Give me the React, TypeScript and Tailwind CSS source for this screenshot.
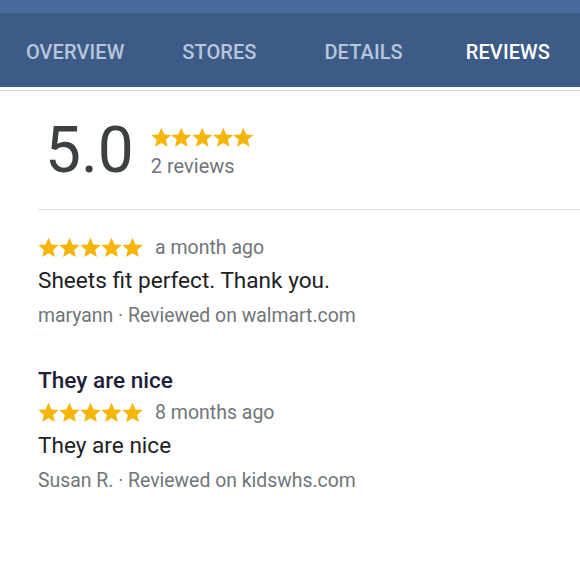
import React from 'react'

const tabs = ['Overview', 'Stores', 'Details', 'Reviews']

const reviews = [
  {
    title: '',
    when: 'a month ago',
    text: 'Sheets fit perfect. Thank you.',
    author: 'maryann',
    site: 'walmart.com',
  },
  {
    title: 'They are nice',
    when: '8 months ago',
    text: 'They are nice',
    author: 'Susan R.',
    site: 'kidswhs.com',
  },
]

function Stars({ size }: { size: number }) {
  return (
    <div className="flex">
      {[0, 1, 2, 3, 4].map((i) => (
        <svg key={i} width={size} height={size} viewBox="1 1.2 22 21.6" className="fill-[#f5b50a]">
          <path d="M12 1.8l3.1 7.1 7.6.6-5.8 5 1.8 7.5L12 18 5.3 22l1.8-7.5-5.8-5 7.6-.6z" />
        </svg>
      ))}
    </div>
  )
}

export default function App() {
  return (
    <main className="w-[580px] h-[578px] bg-white overflow-hidden font-['Roboto','Liberation_Sans',sans-serif]">
      <div className="h-[13px] bg-[#486a9c]" />
      <nav className="flex h-[74px] pt-[3px] pl-[3px] bg-[#3c5b86]">
        {tabs.map((t) => (
          <div
            key={t}
            className={
              'flex-1 flex items-center justify-center uppercase text-[20px] font-medium tracking-[0.1px] ' +
              (t === 'Reviews' ? 'text-white' : 'text-[#b8c6dc]')
            }
          >
            {t}
          </div>
        ))}
      </nav>
      <div className="flex h-[3px] border-b border-[#d6d6d6] box-content">
        <div className="flex-[3]" />
        <div className="flex-1 bg-white" />
      </div>

      <section className="pl-[38px]">
        <div className="flex items-start pt-[28px] pl-[7px]">
          <div className="text-[64px] leading-none text-[#3c4043]">5.0</div>
          <div className="ml-[17px] pt-[8px]">
            <Stars size={20.6} />
            <div className="mt-[3px] text-[20px] text-[#70757a]">2 reviews</div>
          </div>
        </div>
        <div className="mt-[26px] h-px bg-[#dadce0]" />

        {reviews.map((r, i) => (
          <div key={i} className={i === 0 ? 'pt-[21px]' : 'pt-[31px]'}>
            {r.title && (
              <div className="h-[31px] flex items-center text-[22.6px] font-medium text-[#1f1f3a]">{r.title}</div>
            )}
            <div className="h-[33px] flex items-center">
              <Stars size={21} />
              <span className="ml-[12px] text-[19.5px] text-[#70757a]">{r.when}</span>
            </div>
            <div className="h-[34px] flex items-center text-[22.6px] text-[#202124]">{r.text}</div>
            <div className="h-[36px] flex items-center text-[19.4px] text-[#70757a]">
              {r.author} · Reviewed on {r.site}
            </div>
          </div>
        ))}
      </section>
    </main>
  )
}
